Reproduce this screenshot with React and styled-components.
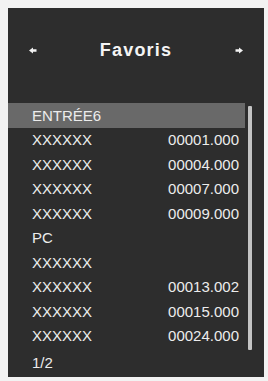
import React from 'react';
import styled, { createGlobalStyle } from 'styled-components';

const GlobalStyle = createGlobalStyle`
  body {
    margin: 0;
    background: #f2f2f2;
    font-family: 'Liberation Sans', Arial, sans-serif;
  }
`;

const entries = [
  { name: 'ENTRÉE6', selected: true },
  { name: 'XXXXXX', value: '00001.000' },
  { name: 'XXXXXX', value: '00004.000' },
  { name: 'XXXXXX', value: '00007.000' },
  { name: 'XXXXXX', value: '00009.000' },
  { name: 'PC' },
  { name: 'XXXXXX' },
  { name: 'XXXXXX', value: '00013.002' },
  { name: 'XXXXXX', value: '00015.000' },
  { name: 'XXXXXX', value: '00024.000' },
];

const Arrow = ({ dir }) => (
  <ArrowIcon width="8" height="7" viewBox="0 0 8 7" $flip={dir === 'right'}>
    <path d="M0 3.5 L4 0.5 L4 2.3 L7.5 2.3 L7.5 4.7 L4 4.7 L4 6.5 Z" fill="#f2f2f2" />
  </ArrowIcon>
);

const App = () => {
  return (
    <Page>
      <GlobalStyle />
      <Panel>
        <Header>
          <Arrow dir="left" />
          <Title>Favoris</Title>
          <Arrow dir="right" />
        </Header>
        <ListArea>
          <List>
            {entries.map((e, i) => (
              <Row key={i} $selected={e.selected}>
                <span>{e.name}</span>
                {e.value && <span>{e.value}</span>}
              </Row>
            ))}
          </List>
          <ScrollThumb />
        </ListArea>
        <Footer>1/2</Footer>
      </Panel>
    </Page>
  );
};

const Page = styled.div`
  padding: 8px 4px 4px 8px;
`;

const Panel = styled.div`
  width: 256px;
  height: 369px;
  background: #2d2d2d;
  display: flex;
  flex-direction: column;
  color: #ececec;
`;

const Header = styled.div`
  height: 80px;
  margin-bottom: 15px;
  display: flex;
  align-items: center;
  justify-content: space-between;
  padding: 4px 21px 0 21px;
  box-sizing: border-box;
`;

const ArrowIcon = styled.svg`
  display: block;
  transform: ${(p) => (p.$flip ? 'scaleX(-1)' : 'none')};
`;

const Title = styled.div`
  font-size: 18px;
  font-weight: bold;
  letter-spacing: 1.2px;
  color: #f4f4f4;
`;

const ListArea = styled.div`
  display: flex;
  gap: 3px;
`;

const List = styled.div`
  width: 237px;
  display: flex;
  flex-direction: column;
`;

const Row = styled.div`
  height: 24.5px;
  display: flex;
  align-items: center;
  justify-content: space-between;
  padding: 0 6px 0 24px;
  font-size: 15px;
  background: ${(p) => (p.$selected ? '#696969' : 'transparent')};
`;

const ScrollThumb = styled.div`
  width: 4px;
  height: 244px;
  margin-top: 3px;
  background: #c4c4c4;
  border-radius: 1px;
`;

const Footer = styled.div`
  height: 24.5px;
  display: flex;
  align-items: center;
  padding-left: 24px;
  font-size: 15px;
`;

export default App;
